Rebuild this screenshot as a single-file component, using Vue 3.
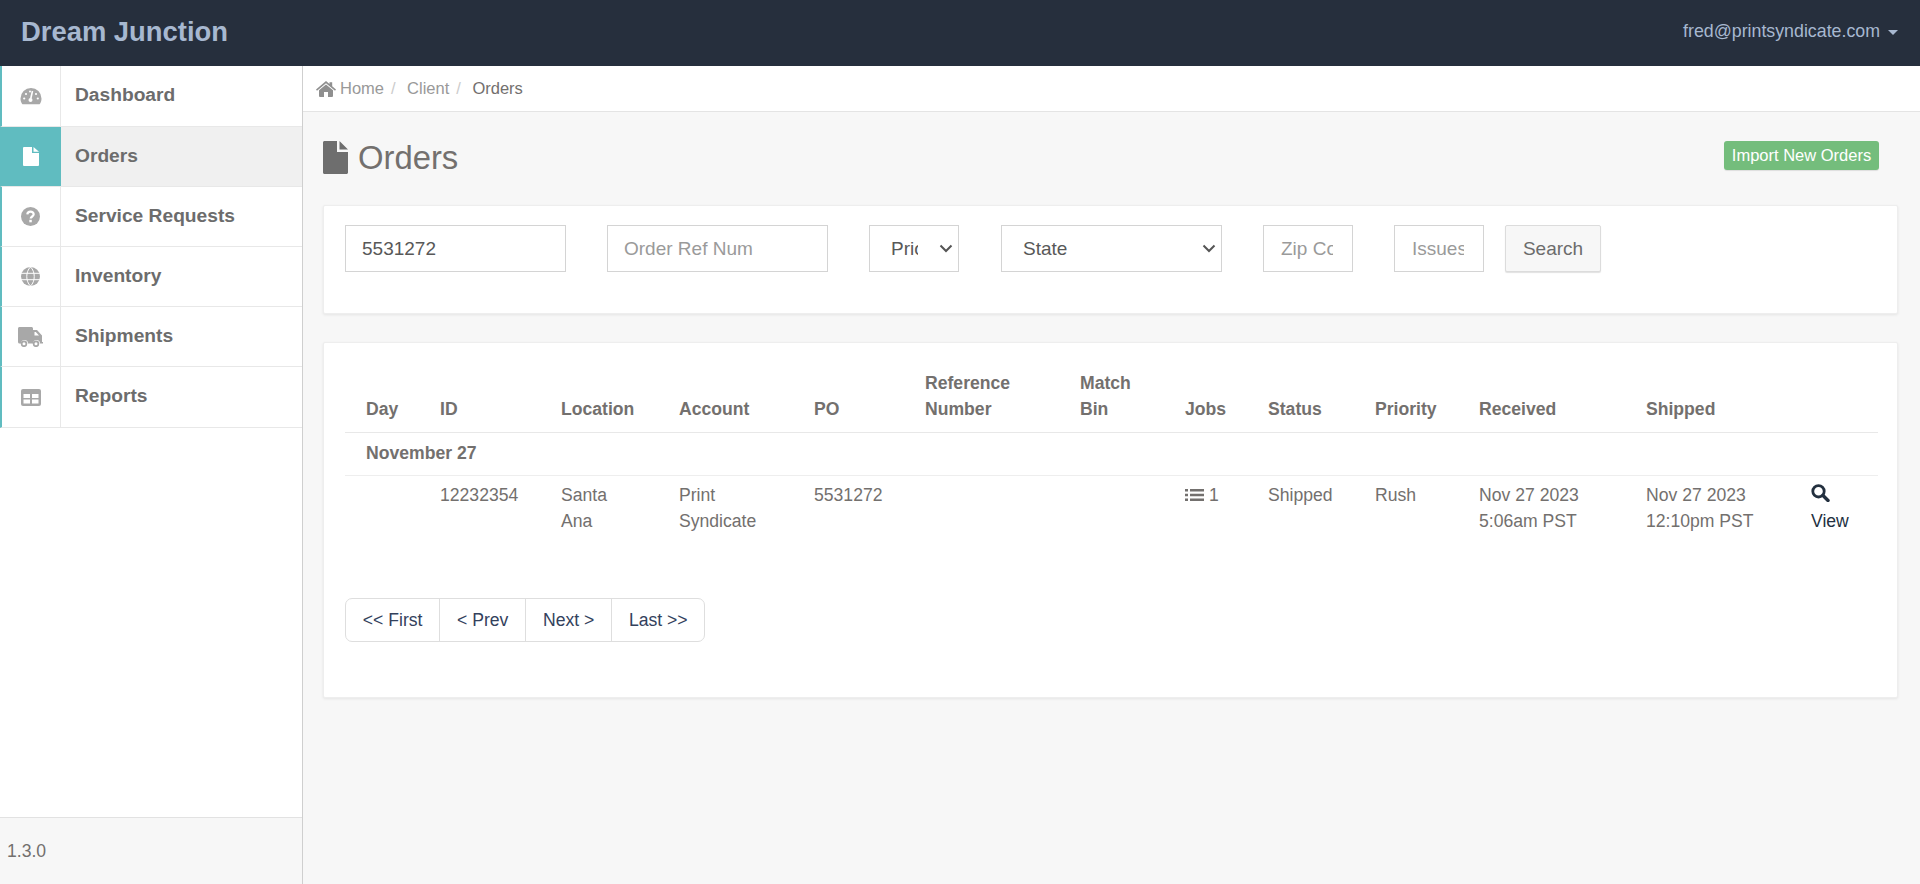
<script setup>
const nav = [
  { label: 'Dashboard', icon: 'gauge' },
  { label: 'Orders', icon: 'file', active: true },
  { label: 'Service Requests', icon: 'question' },
  { label: 'Inventory', icon: 'globe' },
  { label: 'Shipments', icon: 'truck' },
  { label: 'Reports', icon: 'table' },
]
const cols = [87, 121, 118, 135, 111, 155, 105, 83, 107, 104, 167, 165, 75]
const heads = ['Day', 'ID', 'Location', 'Account', 'PO', 'Reference Number', 'Match Bin', 'Jobs', 'Status', 'Priority', 'Received', 'Shipped', '']
const pages = ['<< First', '< Prev', 'Next >', 'Last >>']
</script>

<template>
  <div class="page">
    <header class="topbar">
      <div class="brand">Dream Junction</div>
      <div class="user">fred@printsyndicate.com<span class="caret"></span></div>
    </header>
    <div class="body">
      <aside class="sidebar">
        <nav class="nav">
          <a v-for="item in nav" :key="item.label" class="nav-item" :class="{ active: item.active }">
            <span class="nav-icon">
              <svg v-if="item.icon === 'gauge'" width="22" height="18" viewBox="0 0 22 18">
                <path d="M11 1a10.500 10.500 0 0 0-10.500 10.500c0 2 .5 3.800 1.500 5.200.3.400.6.500 1 .500h16c.4 0 .7-.1 1-.5 1-1.400 1.500-3.200 1.500-5.200A10.500 10.500 0 0 0 11 1z" fill="currentColor"/>
                <path d="M12.500 4l-1.700 7.500" stroke="#fff" stroke-width="1.600" fill="none"/>
                <circle cx="10.500" cy="13" r="2" fill="#fff"/>
                <circle cx="4.200" cy="11.500" r="1.100" fill="#fff"/><circle cx="6" cy="7" r="1.100" fill="#fff"/>
                <circle cx="10" cy="4.500" r="1" fill="#fff"/><circle cx="16" cy="7" r="1.100" fill="#fff"/><circle cx="17.800" cy="11.500" r="1.100" fill="#fff"/>
              </svg>
              <svg v-else-if="item.icon === 'file'" width="16" height="19" viewBox="0 0 16 19">
                <path d="M1 0h8v6h7v12a1 1 0 0 1-1 1H1a1 1 0 0 1-1-1V1a1 1 0 0 1 1-1zM10.500 0L16 4.800h-5.500z" fill="currentColor"/>
              </svg>
              <svg v-else-if="item.icon === 'question'" width="19" height="19" viewBox="0 0 19 19">
                <circle cx="9.500" cy="9.500" r="9.500" fill="currentColor"/>
                <path d="M6.300 7.300c.2-1.700 1.500-2.600 3.200-2.600 1.800 0 3.200 1 3.200 2.600 0 2.200-3 2.200-3 4.300" stroke="#fff" stroke-width="2.200" fill="none"/>
                <rect x="8.300" y="12.800" width="2.500" height="2.500" fill="#fff"/>
              </svg>
              <svg v-else-if="item.icon === 'globe'" width="19" height="19" viewBox="0 0 19 19">
                <circle cx="9.500" cy="9.500" r="9.500" fill="currentColor"/>
                <path d="M0 6.300h19M0 12.700h19M9.500 0c-5 4.500-5 14.500 0 19M9.500 0c5 4.500 5 14.500 0 19" stroke="#fff" stroke-width="1" fill="none"/>
              </svg>
              <svg v-else-if="item.icon === 'truck'" width="25" height="20" viewBox="0 0 25 20">
                <path d="M1.500 0h12c.8 0 1.500.7 1.500 1.500V3h4l5 5.500V15h1v1.500h-3a3.500 3.500 0 0 0-7 0h-5a3.500 3.500 0 0 0-7 0H1.500C.7 16.500 0 15.800 0 15V1.500C0 .7.700 0 1.500 0z" fill="currentColor"/>
                <path d="M16.500 5v3.500h4.500L17.800 5z" fill="#fff"/>
                <circle cx="6" cy="16.800" r="2.400" fill="none" stroke="currentColor" stroke-width="1.800"/>
                <circle cx="18" cy="16.800" r="2.400" fill="none" stroke="currentColor" stroke-width="1.800"/>
              </svg>
              <svg v-else width="20" height="17" viewBox="0 0 20 17">
                <rect width="20" height="17" rx="2" fill="currentColor"/>
                <rect x="2.500" y="5" width="6.500" height="4" fill="#fff"/><rect x="11" y="5" width="6.500" height="4" fill="#fff"/>
                <rect x="2.500" y="10.500" width="6.500" height="4" fill="#fff"/><rect x="11" y="10.500" width="6.500" height="4" fill="#fff"/>
              </svg>
            </span>
            <span class="nav-label">{{ item.label }}</span>
          </a>
        </nav>
        <footer class="version">1.3.0</footer>
      </aside>

      <main class="main">
        <div class="crumbs">
          <svg class="home" width="20" height="16" viewBox="0 0 20 16">
            <path d="M10 0l3.500 3V1.200h2.700v4.100L20 8.500l-1 1.200-9-7.500-9 7.500-1-1.200z" fill="currentColor"/>
            <path d="M10 3.500l7 5.800V15a1 1 0 0 1-1 1h-4v-5H8v5H4a1 1 0 0 1-1-1V9.300z" fill="currentColor"/>
          </svg>
          <span class="crumb">Home</span><span class="sep">/</span>
          <span class="crumb">Client</span><span class="sep">/</span>
          <span class="crumb current">Orders</span>
        </div>

        <div class="content">
          <div class="title-row">
            <h1 class="title">
              <svg width="25" height="33" viewBox="0 0 25 33">
                <path d="M1.500 0H14v11h11v20.500c0 .8-.7 1.500-1.500 1.500h-22C.7 33 0 32.300 0 31.500v-30C0 .7.700 0 1.500 0zM16.500 0L25 8.500h-8.500z" fill="currentColor"/>
              </svg>
              Orders
            </h1>
            <button class="import">Import New Orders</button>
          </div>

          <section class="card filters">
            <input class="field wide" value="5531272" />
            <input class="field wide" placeholder="Order Ref Num" />
            <span class="pick-wrap narrow">
              <select class="pick"><option>Priority</option></select>
              <svg class="chev" width="14" height="9" viewBox="0 0 14 9"><path d="M1.500 1.500L7 7l5.500-5.500" fill="none" stroke="currentColor" stroke-width="2"/></svg>
            </span>
            <span class="pick-wrap wide">
              <select class="pick"><option>State</option></select>
              <svg class="chev" width="14" height="9" viewBox="0 0 14 9"><path d="M1.500 1.500L7 7l5.500-5.500" fill="none" stroke="currentColor" stroke-width="2"/></svg>
            </span>
            <input class="field narrow clip" placeholder="Zip Code" />
            <input class="field narrow clip last" placeholder="Issues" />
            <button class="search">Search</button>
          </section>

          <section class="card results">
            <table class="orders">
              <colgroup>
                <col v-for="(w, i) in cols" :key="i" :style="{ width: w + 'px' }" />
              </colgroup>
              <thead>
                <tr><th v-for="h in heads" :key="h">{{ h }}</th></tr>
              </thead>
              <tbody>
                <tr class="group"><td colspan="13">November 27</td></tr>
                <tr class="row">
                  <td></td>
                  <td>12232354</td>
                  <td>Santa<br />Ana</td>
                  <td>Print<br />Syndicate</td>
                  <td>5531272</td>
                  <td></td>
                  <td></td>
                  <td>
                    <svg class="list" width="19" height="14" viewBox="0 0 19 14">
                      <path d="M0 1h3v2.400H0zM0 5.800h3v2.400H0zM0 10.600h3V13H0zM5 1h14v2.400H5zM5 5.800h14v2.400H5zM5 10.600h14V13H5z" fill="currentColor"/>
                    </svg>
                    1
                  </td>
                  <td>Shipped</td>
                  <td>Rush</td>
                  <td>Nov 27 2023<br />5:06am PST</td>
                  <td>Nov 27 2023<br />12:10pm PST</td>
                  <td class="view">
                    <div class="view-icon">
                      <svg width="19" height="18" viewBox="0 0 19 18">
                        <circle cx="7.500" cy="7.300" r="5.700" fill="none" stroke="currentColor" stroke-width="2.800"/>
                        <path d="M12 11.500l5 5" stroke="currentColor" stroke-width="3.400" stroke-linecap="round"/>
                      </svg>
                    </div>
                    <div>View</div>
                  </td>
                </tr>
              </tbody>
            </table>
            <div class="pager">
              <a v-for="p in pages" :key="p" class="page-btn">{{ p }}</a>
            </div>
          </section>
        </div>
      </main>
    </div>
  </div>
</template>

<style>
html, body { margin: 0; background: #f7f7f7; }
</style>

<style scoped>
* { box-sizing: border-box; }
.page { height: 884px; display: flex; flex-direction: column; font-family: "Liberation Sans", Arial, sans-serif; font-size: 17.6px; color: #73706e; overflow: hidden; }
.topbar { height: 66px; flex: none; background: #262f3d; display: flex; justify-content: space-between; align-items: center; padding: 0 22px 3px 21px; }
.brand { font-size: 27.4px; font-weight: 700; color: #a7b8d0; }
.user { font-size: 17.8px; color: #a7b8d0; display: flex; align-items: center; }
.caret { width: 0; height: 0; margin-left: 8px; margin-top: 2px; border-left: 5px solid transparent; border-right: 5px solid transparent; border-top: 5px solid #a7b8d0; }
.body { flex: 1; display: flex; min-height: 0; }
.sidebar { width: 303px; flex: none; background: #fff; border-right: 1px solid #cfcfcf; display: flex; flex-direction: column; justify-content: space-between; }
.nav-item { height: 60px; display: flex; border-left: 2px solid #60bcc0; border-bottom: 1px solid #e8e8e8; font-size: 19.2px; font-weight: 700; color: #6c6c6c; }
.nav-item:first-child, .nav-item:last-child { height: 61px; }
.nav-icon { width: 59px; flex: none; display: flex; align-items: center; justify-content: center; color: #a8a8a8; border-right: 1px solid #e8e8e8; padding-right: 1px; }
.nav-label { flex: 1; display: flex; align-items: center; padding-left: 14px; padding-bottom: 2px; }
.nav-item.active { background: #f0f0f0; }
.nav-item.active .nav-icon { background: #60bcc0; color: #fff; border-right: 0; }
.version { height: 67px; background: #f7f7f7; border-top: 1px solid #e2e2e2; padding: 20px 0 0 7px; font-size: 17.6px; line-height: 26px; color: #73706e; }
.main { flex: 1; min-width: 0; }
.crumbs { height: 46px; background: #fff; border-bottom: 1px solid #e4e4e4; display: flex; align-items: center; padding-left: 13px; font-size: 16.5px; color: #999; }
.home { margin-right: 4px; color: #8f8f8f; }
.sep { margin: 0 11.500px 0 7px; color: #ccc; }
.crumb.current { color: #73706e; }
.content { padding: 0 22px 0 20px; }
.title-row { height: 93px; display: flex; justify-content: space-between; align-items: flex-start; padding: 29px 19px 0 0; }
.title { margin: 0; display: flex; align-items: center; gap: 10px; font-size: 32.8px; font-weight: 400; line-height: 33px; color: #73706e; }
.title svg { color: #6e6e6e; }
.import { height: 29px; width: 155px; padding: 0; border: 0; border-radius: 3px; background: #74bd7c; color: #fff; font: 400 16.500px "Liberation Sans", Arial, sans-serif; box-shadow: 0 1px 1px rgba(0,0,0,.1); }
.card { background: #fff; border: 1px solid #eeeeee; box-shadow: 0 1px 3px rgba(0,0,0,.08); border-radius: 2px; }
.filters { height: 109px; display: flex; align-items: flex-start; padding: 19px 21px; }
.field { height: 47px; border: 1px solid #d4d4d4; background: #fff; padding: 0 16px; margin-right: 41px; font: 400 19px "Liberation Sans", Arial, sans-serif; color: #585858; outline: none; border-radius: 0; }
.field::placeholder { color: #9a9a9a; opacity: 1; }
.wide { width: 221px; }
.narrow { width: 90px; }
.clip { padding: 0 19px 0 17px; }
.last { margin-right: 21px; }
.pick-wrap { position: relative; height: 47px; margin-right: 42px; display: block; color: #555; flex: none; }
.pick-wrap.wide { margin-right: 41px; }
.pick { appearance: none; width: 100%; height: 47px; border: 1px solid #d4d4d4; background: #fff; padding: 0 40px 0 21px; font: 400 19px "Liberation Sans", Arial, sans-serif; color: #585858; border-radius: 0; outline: none; }
.chev { position: absolute; right: 6px; top: 19px; pointer-events: none; }
.search { width: 96px; height: 47px; background: #f7f7f7; border: 1px solid #dcdcdc; border-radius: 2px; color: #6c6c6c; font: 400 19px "Liberation Sans", Arial, sans-serif; box-shadow: 0 1px 1px rgba(0,0,0,.12); }
.results { margin-top: 28px; height: 356px; padding: 0 21px; }
.orders { width: 1533px; table-layout: fixed; border-collapse: collapse; margin-top: 0; }
.orders th { height: 89px; vertical-align: bottom; text-align: left; font-weight: 700; padding: 0 20px 10px 8px; line-height: 26px; border-bottom: 1px solid #e8e8e8; }
.orders th:first-child { padding-left: 21px; }
.group td { height: 43px; font-weight: 700; padding: 0 0 1px 21px; border-bottom: 1px solid #eeeeee; }
.row td { vertical-align: top; padding: 6px 0 0 8px; line-height: 26px; height: 70px; }
.list { vertical-align: -1px; }
.view { color: #23303f; }
.view-icon { height: 26px; padding-top: 2px; }
.view-icon svg { display: block; }
.pager { display: inline-flex; margin-top: 53px; height: 44px; border: 1px solid #dedede; border-radius: 7px; background: #fff; overflow: hidden; }
.page-btn { display: flex; align-items: center; padding: 0 16.800px; border-left: 1px solid #dedede; color: #33415c; }
.page-btn:first-child { border-left: 0; }
</style>
